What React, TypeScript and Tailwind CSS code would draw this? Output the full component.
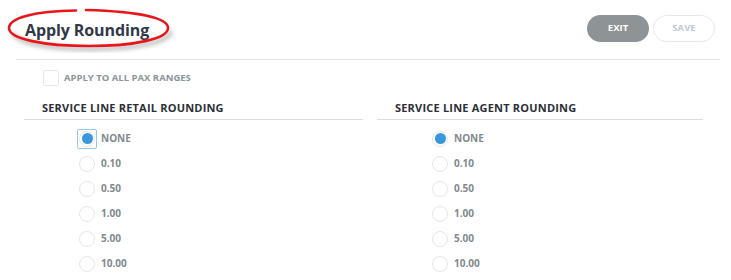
import { useState } from 'react';

const OPTIONS = ['NONE', '0.10', '0.50', '1.00', '5.00', '10.00'];

function RoundingGroup({ title, width, focused }: { title: string; width: string; focused?: boolean }) {
    const [value, setValue] = useState('NONE');

    return (
        <div className={width}>
            <div className="pl-[18px] pb-[3px] border-b border-[#dddce9] text-[11px] font-bold text-[#2b2f36] tracking-[0.2px] leading-[16px]">
                {title}
            </div>
            <div className="mt-[6px] pl-[55px] flex flex-col">
                {OPTIONS.map((opt, i) => {
                    const checked = value === opt;
                    return (
                        <label
                            key={opt}
                            onClick={() => setValue(opt)}
                            className="h-[25px] flex items-center gap-[4px] cursor-pointer"
                        >
                            <span
                                className={`w-[20px] h-[20px] -ml-[2px] -mr-[2px] flex items-center justify-center ${focused && i === 0 ? 'border border-[#9cc7ea] rounded-[2px]' : ''}`}
                            >
                                <span className="w-[16px] h-[16px] rounded-full border border-[#e6e7e8] bg-white flex items-center justify-center">
                                    {checked && <span className="w-[11px] h-[11px] rounded-full bg-[#3a97dd]" />}
                                </span>
                            </span>
                            <span className="text-[10px] font-bold text-[#7f898c] ml-[2px]">{opt}</span>
                        </label>
                    );
                })}
            </div>
        </div>
    );
}

export default function App() {
    const [applyAll, setApplyAll] = useState(false);

    return (
        <div className="relative w-[731px] h-[280px] bg-white overflow-hidden" style={{ fontFamily: '"Open Sans", "Noto Sans", sans-serif' }}>
            {/* Header */}
            <div className="ml-4 mr-[11px] h-[60px] border-b border-[#e3e1f0] flex items-center justify-between">
                <h1 className="pl-[9px] text-[16px] font-bold text-[#323847] tracking-[-0.1px]">Apply Rounding</h1>
                <div className="flex items-center gap-[4px] pr-[5px] -mt-[3px]">
                    <button className="w-[62px] h-[27px] rounded-full bg-[#8e9396] text-white text-[9.5px] font-bold">EXIT</button>
                    <button className="w-[62px] h-[27px] rounded-full border border-[#e3e9e7] bg-white text-[#c3c9cc] text-[9.5px] font-bold">SAVE</button>
                </div>
            </div>

            {/* Red annotation ellipse */}
            <svg className="absolute left-[4px] top-[5px] pointer-events-none" width="175" height="48" viewBox="0 0 175 48">
                <defs>
                    <filter id="shadow" x="-20%" y="-40%" width="140%" height="180%">
                        <feGaussianBlur stdDeviation="2" />
                    </filter>
                </defs>
                <path d="M 8 28 C 15 38, 45 44, 88 44 C 132 44, 166 37, 167 26" fill="none" stroke="#a0a0a0" strokeWidth="4" filter="url(#shadow)" opacity="0.7" />
                <path d="M 72 5.5 C 30 6, 5 13, 5 23 C 5 34, 40 41, 85 41 C 130 41, 164 34, 164 23 C 164 13, 135 6.5, 82 5" fill="none" stroke="#e8161b" strokeWidth="2.6" strokeLinecap="round" />
            </svg>

            {/* Apply to all */}
            <div className="mt-[10px] ml-[43px] flex items-center gap-[5px] cursor-pointer" onClick={() => setApplyAll(!applyAll)}>
                <span className="w-[16px] h-[16px] border border-[#e6e7e8] rounded-[2px] flex items-center justify-center">
                    {applyAll && <span className="w-[8px] h-[8px] bg-[#3a97dd]" />}
                </span>
                <span className="text-[9.5px] font-bold text-[#8b9598]">APPLY TO ALL PAX RANGES</span>
            </div>

            {/* Groups */}
            <div className="mt-[14px] ml-[24px] flex gap-[14px]">
                <RoundingGroup title="SERVICE LINE RETAIL ROUNDING" width="w-[339px]" focused />
                <RoundingGroup title="SERVICE LINE AGENT ROUNDING" width="w-[326px]" />
            </div>
        </div>
    );
}
